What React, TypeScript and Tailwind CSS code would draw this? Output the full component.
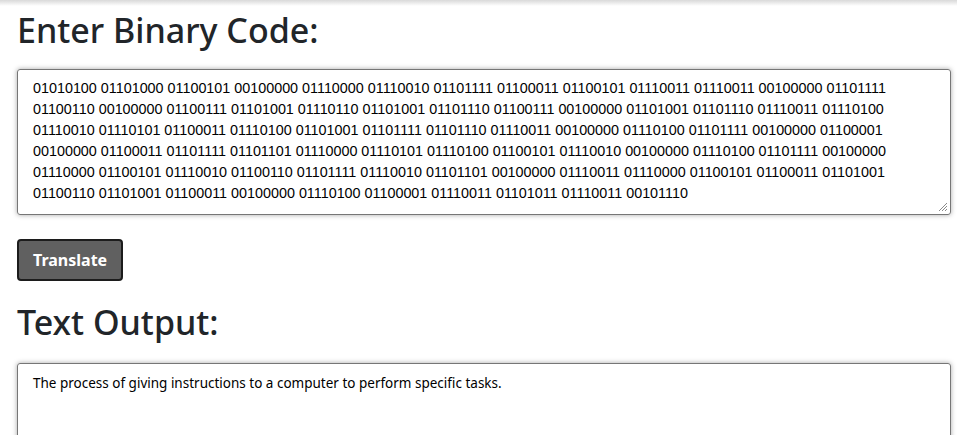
import React from "react";

const binary =
  "01010100 01101000 01100101 00100000 01110000 01110010 01101111 01100011 01100101 01110011 01110011 00100000 01101111 01100110 00100000 01100111 01101001 01110110 01101001 01101110 01100111 00100000 01101001 01101110 01110011 01110100 01110010 01110101 01100011 01110100 01101001 01101111 01101110 01110011 00100000 01110100 01101111 00100000 01100001 00100000 01100011 01101111 01101101 01110000 01110101 01110100 01100101 01110010 00100000 01110100 01101111 00100000 01110000 01100101 01110010 01100110 01101111 01110010 01101101 00100000 01110011 01110000 01100101 01100011 01101001 01100110 01101001 01100011 00100000 01110100 01100001 01110011 01101011 01110011 00101110";

export default function App() {
  return (
    <div className="w-[957px] h-[435px] overflow-hidden bg-white font-['Noto_Sans',sans-serif] text-[#212529]">
      <div className="h-[6px] bg-gradient-to-b from-[#d9d9d9] to-white" />
      <div className="flex flex-col items-stretch pl-[17px] pr-[6px]">
        <h1 className="text-[34px] leading-[48px] font-medium">Enter Binary Code:</h1>
        <div className="relative mt-[15px] h-[146px] border border-[#767676] rounded-[3px] pl-[15px] pr-[24px] pt-[8px] pb-[8px] font-['Liberation_Sans'] text-[14.35px] leading-[21px] text-black shadow-[0_0_5px_rgba(0,0,0,0.35)]">
          {binary}
          <svg className="absolute right-[2px] bottom-[2px]" width="10" height="10" viewBox="0 0 10 10">
            <path d="M9 1 L1 9 M9 4 L4 9 M9 7 L7 9" stroke="#8a8a8a" strokeWidth="1" />
          </svg>
        </div>
        <div className="mt-[24px] flex">
          <button className="h-[42px] px-[14px] bg-[#606060] border-2 border-[#1c1c1c] rounded-[4px] text-white text-[16px] font-bold">
            Translate
          </button>
        </div>
        <h2 className="mt-[17px] text-[34px] leading-[48px] font-medium">Text Output:</h2>
        <div className="mt-[17px] h-[120px] border border-[#767676] rounded-[3px] px-[15px] pt-[9px] text-[13.5px] leading-[20px] text-black shadow-[0_0_5px_rgba(0,0,0,0.35)]">
          The process of giving instructions to a computer to perform specific tasks.
        </div>
      </div>
    </div>
  );
}
